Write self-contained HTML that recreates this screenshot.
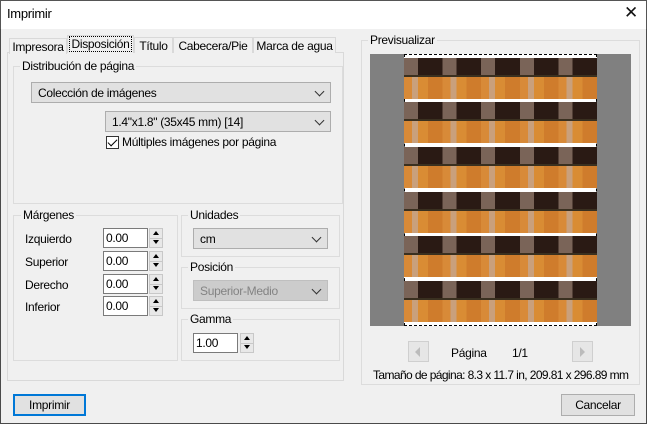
<!DOCTYPE html>
<html><head><meta charset="utf-8"><style>
*{box-sizing:border-box;margin:0;padding:0}
body{width:647px;height:424px;background:#f0f0f0;font-family:"Liberation Sans",sans-serif;font-size:12px;letter-spacing:-0.3px;color:#000;position:relative;overflow:hidden}
.a{position:absolute;white-space:nowrap}
.title{left:0;top:0;width:647px;height:29px;background:#fff;border:1px solid #555;border-bottom:none}
.win{left:0;top:0;width:647px;height:424px;border:1px solid #4a4a4a;border-top:none}
.grp{position:absolute;border:1px solid #dcdcdc}
.lg{position:absolute;top:-8px;left:6px;background:#f0f0f0;padding:0 2px;white-space:nowrap}
.cb{position:absolute;background:#e1e1e1;border:1px solid #adadad;padding:3px 0 0 6px;height:21px;white-space:nowrap}
.cb:after{content:"";position:absolute;right:7px;top:5px;width:6px;height:6px;border-right:1px solid #333;border-bottom:1px solid #333;transform:rotate(45deg)}
.in{position:absolute;background:#fff;border:1px solid #7a7a7a;height:20px;width:45px;padding:2px 0 0 2px;font-size:12px}
.sp{position:absolute;width:14px;height:20px;background:#e8e8e8;border:1px solid #c8c8c8}
.sp:before{content:"";position:absolute;left:3px;top:2px;border:3px solid transparent;border-bottom:4px solid #000;border-top:none}
.sp:after{content:"";position:absolute;left:3px;top:11px;border:3px solid transparent;border-top:4px solid #000;border-bottom:none}
.sp i{position:absolute;left:0;right:0;top:9px;border-top:1px solid #c8c8c8}
.tab{position:absolute;top:37px;height:16px;border:1px solid #d9d9d9;border-bottom:none;background:#f0f0f0;padding-top:1px;text-align:center;white-space:nowrap}
.btn{position:absolute;height:22px;background:#e1e1e1;border:1px solid #adadad;text-align:center;padding-top:3px}
.row{position:absolute;left:0;width:193px;height:41px;
background:
repeating-linear-gradient(90deg,#7a6458 0 14px,#2a1a14 14px 38.6px) top/100% 17px no-repeat,
linear-gradient(#3a3020,#3a3020) 0 17px/100% 2px no-repeat,
repeating-linear-gradient(90deg,#d88a38 0 8px,#c9a07c 8px 14px,#d98c34 14px 24px,#cf7c2c 24px 38.6px) 0 19px/100% 22px no-repeat;}
</style></head><body>
<div class="a win"></div>
<div class="a title"></div>
<div class="a" style="left:7px;top:6px;font-size:13px">Imprimir</div>
<div class="a" style="left:624px;top:3px;font-size:17px;color:#111">✕</div>

<div class="a" style="left:7px;top:52px;width:337px;height:329px;border:1px solid #d9d9d9;background:#f0f0f0"></div>
<div class="tab" style="left:9px;width:58px;top:38px">Impresora</div>
<div class="tab" style="left:67px;width:67px;top:35px;height:18px;z-index:2"><span style="outline:1px dotted #000;padding:0 1px">Disposición</span></div>
<div class="tab" style="left:134px;width:39px">Título</div>
<div class="tab" style="left:173px;width:80px">Cabecera/Pie</div>
<div class="tab" style="left:253px;width:83px">Marca de agua</div>

<div class="grp" style="left:13px;top:66px;width:330px;height:138px"><div class="lg">Distribución de página</div></div>
<div class="cb" style="left:31px;top:82px;width:300px">Colección de imágenes</div>
<div class="cb" style="left:105px;top:111px;width:226px">1.4"x1.8" (35x45 mm) [14]</div>
<div class="a" style="left:106px;top:136px;width:13px;height:13px;border:1px solid #333;background:#fff"><div style="position:absolute;left:3px;top:0;width:5px;height:9px;border-right:1.5px solid #000;border-bottom:1.5px solid #000;transform:rotate(45deg)"></div></div>
<div class="a" style="left:122px;top:135px">Múltiples imágenes por página</div>

<div class="grp" style="left:13px;top:215px;width:165px;height:146px"><div class="lg" style="left:7px">Márgenes</div></div>
<div class="a" style="left:25px;top:232px">Izquierdo</div>
<div class="a" style="left:25px;top:255px">Superior</div>
<div class="a" style="left:25px;top:278px">Derecho</div>
<div class="a" style="left:25px;top:300px">Inferior</div>
<div class="in" style="left:103px;top:228px">0.00</div><div class="sp" style="left:149px;top:228px"><i></i></div>
<div class="in" style="left:103px;top:251px">0.00</div><div class="sp" style="left:149px;top:251px"><i></i></div>
<div class="in" style="left:103px;top:274px">0.00</div><div class="sp" style="left:149px;top:274px"><i></i></div>
<div class="in" style="left:103px;top:296px">0.00</div><div class="sp" style="left:149px;top:296px"><i></i></div>

<div class="grp" style="left:181px;top:215px;width:159px;height:42px"><div class="lg" style="left:6px">Unidades</div></div>
<div class="cb" style="left:193px;top:228px;width:135px">cm</div>
<div class="grp" style="left:181px;top:267px;width:159px;height:42px"><div class="lg" style="left:6px">Posición</div></div>
<div class="cb" style="left:193px;top:280px;width:135px;background:#ccc;border-color:#bfbfbf;color:#838383">Superior-Medio</div>
<div class="grp" style="left:181px;top:319px;width:159px;height:42px"><div class="lg" style="left:6px">Gamma</div></div>
<div class="in" style="left:193px;top:333px">1.00</div><div class="sp" style="left:240px;top:333px"><i></i></div>

<div class="grp" style="left:361px;top:40px;width:279px;height:345px"><div class="lg" style="left:6px">Previsualizar</div></div>
<div class="a" style="left:370px;top:54px;width:261px;height:272px;background:#808080"></div>
<div class="a" style="left:404px;top:54px;width:193px;height:272px;background:#fff;border:1px dashed #000">
<div class="row" style="top:3px;left:-1px"></div>
<div class="row" style="top:47px;left:-1px"></div>
<div class="row" style="top:92px;left:-1px"></div>
<div class="row" style="top:137px;left:-1px"></div>
<div class="row" style="top:181px;left:-1px"></div>
<div class="row" style="top:226px;left:-1px"></div>
</div>
<div class="a" style="left:408px;top:341px;width:21px;height:21px;border:1px solid #cfcfcf;background:#e6e6e6"><div style="position:absolute;left:6px;top:5px;border:5px solid transparent;border-right:5px solid #bbb;border-left:none"></div></div>
<div class="a" style="left:572px;top:341px;width:21px;height:21px;border:1px solid #cfcfcf;background:#e6e6e6"><div style="position:absolute;left:7px;top:5px;border:5px solid transparent;border-left:5px solid #bbb;border-right:none"></div></div>
<div class="a" style="left:451px;top:346px">Página</div>
<div class="a" style="left:512px;top:346px">1/1</div>
<div class="a" style="left:373px;top:368px;letter-spacing:-0.6px">Tamaño de página: 8.3 x 11.7 in, 209.81 x 296.89 mm</div>

<div class="btn" style="left:13px;top:394px;width:73px;border:2px solid #0078d7;padding-top:2px">Imprimir</div>
<div class="btn" style="left:561px;top:394px;width:74px">Cancelar</div>
</body></html>
